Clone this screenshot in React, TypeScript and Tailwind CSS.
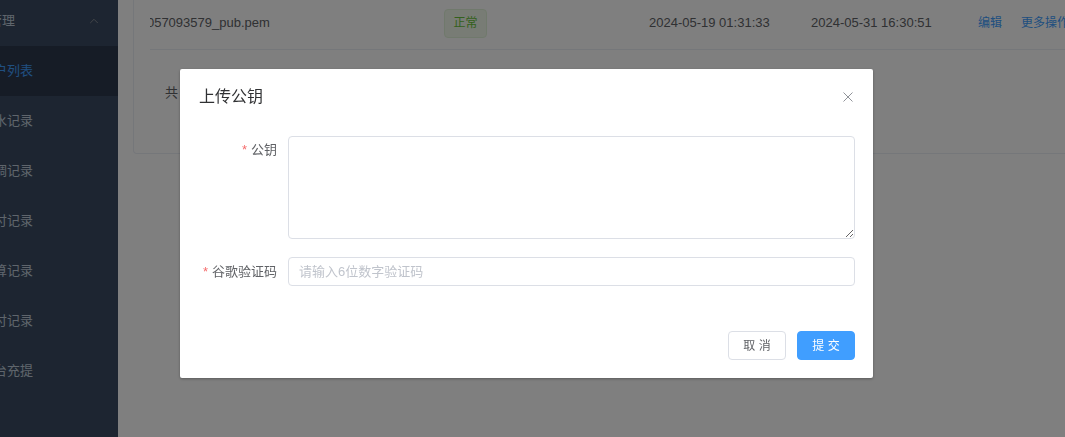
import { ChevronUp } from 'lucide-react';

const menuItems = ['流水记录', '回调记录', '支付记录', '结算记录', '代付记录', '平台充提'];

function Sidebar() {
  return (
    <aside className="w-[118px] shrink-0 overflow-hidden bg-[#3a4a62] text-[13px] text-[#bfcbd9]">
      <div className="-mt-[4px]">
        <div className="flex h-[50px] items-center">
          <div className="flex w-[15px] justify-end">
            <span className="shrink-0 whitespace-nowrap">商户管理</span>
          </div>
          <ChevronUp size={14} strokeWidth={1.5} className="ml-auto mr-[17px] -mt-[1px] text-[#909399]" />
        </div>
        <div className="flex h-[50px] items-center bg-[#2c384c] text-[#409eff]">
          <div className="flex w-[33px] justify-end">
            <span className="shrink-0 whitespace-nowrap">商户列表</span>
          </div>
        </div>
        {menuItems.map(item => (
          <div key={item} className="flex h-[50px] items-center">
            <div className="flex w-[33px] justify-end">
              <span className="shrink-0 whitespace-nowrap">{item}</span>
            </div>
          </div>
        ))}
      </div>
    </aside>
  );
}

function KeyTable() {
  return (
    <main className="flex-1 overflow-hidden bg-white pl-[15px]">
      <div className="w-[960px] rounded-b-[4px] border border-t-0 border-[#ebeef5] px-[16px] pb-[46px]">
        <div className="flex h-[50px] items-center border-b border-[#ebeef5] pb-[3px] text-[13px] text-[#606266]">
          <div className="w-[294px] overflow-hidden">
            <span className="-ml-[32px] block whitespace-nowrap">1716057093579_pub.pem</span>
          </div>
          <div className="w-[205px]">
            <span className="inline-flex h-[29px] w-[43px] items-center justify-center rounded-[4px] border border-[#e1f3d8] bg-[#f0f9eb] text-[12px] text-[#67c23a]">
              正常
            </span>
          </div>
          <div className="w-[162px] whitespace-nowrap">2024-05-19 01:31:33</div>
          <div className="w-[167px] whitespace-nowrap">2024-05-31 16:30:51</div>
          <div className="w-[43px] text-[12px] text-[#409eff]">编辑</div>
          <div className="whitespace-nowrap text-[12px] text-[#409eff]">更多操作</div>
        </div>
        <div className="pl-[15px] pt-[29px] text-[13px] leading-[28px] text-[#606266]">共 1 条</div>
      </div>
    </main>
  );
}

function UploadKeyDialog() {
  return (
    <div className="fixed inset-0 pl-[180px] pt-[69px]">
      <div className="w-[693px] rounded-[2px] bg-white shadow-[0_1px_3px_rgba(0,0,0,0.3)]">
        <div className="flex items-center justify-between pl-[19px] pr-[20px] pt-[16px]">
          <span className="text-[16px] leading-[24px] text-[#303133]">上传公钥</span>
          <svg width="10" height="10" viewBox="0 0 10 10" className="text-[#909399]">
            <path d="M0.5 0.5L9.5 9.5M9.5 0.5L0.5 9.5" stroke="currentColor" strokeWidth="1" />
          </svg>
        </div>
        <div className="pl-[20px] pr-[18px] pt-[27px] text-[13px]">
          <div className="flex">
            <label className="w-[88px] shrink-0 pr-[11px] text-right leading-[28px] text-[#606266]">
              <span className="mr-[4px] text-[#f56c6c]">*</span>公钥
            </label>
            <textarea className="h-[103px] flex-1 resize-y rounded-[4px] border border-[#dcdfe6] px-[10px] py-[5px] text-[13px] text-[#606266] outline-none" />
          </div>
          <div className="mt-[18px] flex">
            <label className="w-[88px] shrink-0 pr-[11px] text-right leading-[29px] text-[#606266]">
              <span className="mr-[4px] text-[#f56c6c]">*</span>谷歌验证码
            </label>
            <input
              placeholder="请输入6位数字验证码"
              className="h-[29px] flex-1 rounded-[4px] border border-[#dcdfe6] px-[10px] text-[13px] text-[#606266] outline-none placeholder:text-[#c0c4cc]"
            />
          </div>
        </div>
        <div className="flex justify-end gap-[11px] pb-[18px] pr-[18px] pt-[45px] text-[12px]">
          <button className="h-[29px] w-[58px] rounded-[4px] border border-[#dcdfe6] bg-white text-[#606266]">
            取 消
          </button>
          <button className="h-[29px] w-[58px] rounded-[4px] border border-[#409eff] bg-[#409eff] text-white">
            提 交
          </button>
        </div>
      </div>
    </div>
  );
}

export default function App() {
  return (
    <div className="relative flex h-[437px] w-[1065px] overflow-hidden font-['Liberation_Sans','Noto_Sans_CJK_SC',sans-serif]">
      <Sidebar />
      <KeyTable />
      <div className="fixed inset-0 bg-black/50" />
      <UploadKeyDialog />
    </div>
  );
}
